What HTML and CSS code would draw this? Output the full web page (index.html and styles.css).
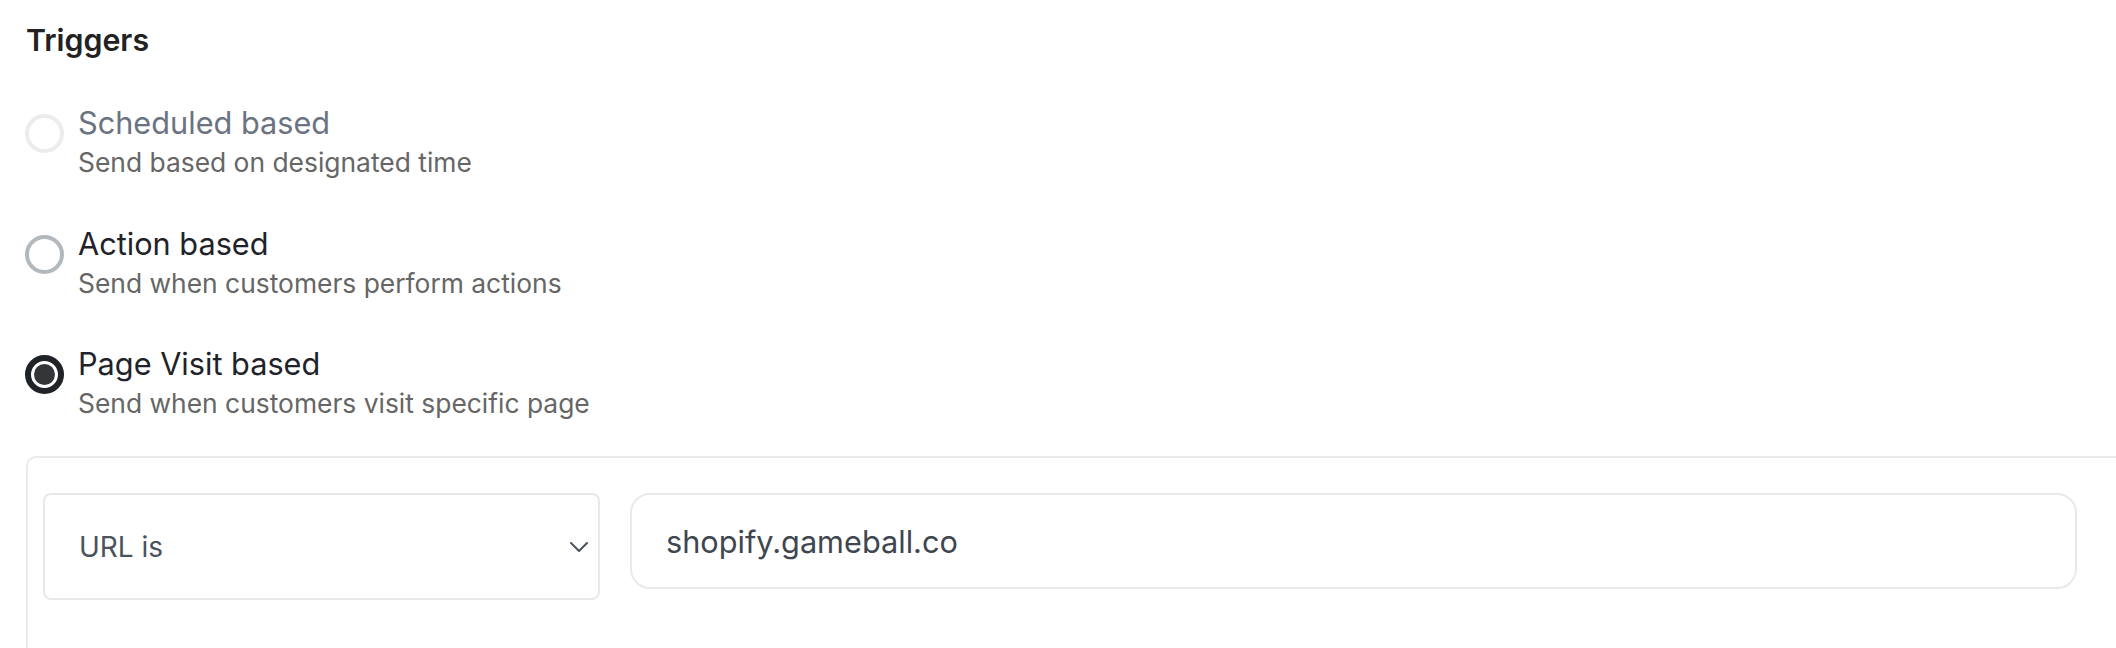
FILE: index.html
```html
<!DOCTYPE html>
<html lang="en">
<head>
<meta charset="utf-8">
<title>Triggers</title>
<link rel="stylesheet" href="styles.css">
</head>
<body>
<main class="page">
  <h2 class="title">Triggers</h2>
  <div class="options">
    <label class="option option--disabled">
      <span class="radio radio--disabled"></span>
      <span class="option-text">
        <span class="option-label">Scheduled based</span>
        <span class="option-desc">Send based on designated time</span>
      </span>
    </label>
    <label class="option">
      <span class="radio"></span>
      <span class="option-text">
        <span class="option-label">Action based</span>
        <span class="option-desc">Send when customers perform actions</span>
      </span>
    </label>
    <label class="option">
      <span class="radio radio--checked"></span>
      <span class="option-text">
        <span class="option-label">Page Visit based</span>
        <span class="option-desc">Send when customers visit specific page</span>
      </span>
    </label>
  </div>
  <section class="panel">
    <div class="rule-row">
      <div class="select">
        <span class="select-value">URL is</span>
        <svg class="chevron" viewBox="0 0 20 12" width="20" height="12" aria-hidden="true">
          <path d="M2 2 L10 10 L18 2" fill="none" stroke="currentColor" stroke-width="2" stroke-linecap="round" stroke-linejoin="round"/>
        </svg>
      </div>
      <input class="text-input" type="text" value="shopify.gameball.co" readonly>
    </div>
  </section>
</main>
</body>
</html>
```

FILE: styles.css
```css
html, body {
  margin: 0;
  padding: 0;
  background: #ffffff;
  overflow: hidden;
}

body {
  font-family: "Inter", "Noto Sans", "Liberation Sans", sans-serif;
  color: #1f2329;
}

.page {
  padding-left: 26px;
}

.title {
  margin: 22px 0 0 0;
  font-size: 30.3px;
  line-height: 36px;
  font-weight: 600;
  color: #222222;
}

.options {
  display: flex;
  flex-direction: column;
  gap: 47.5px;
  margin-top: 47px;
}

.option {
  display: flex;
  align-items: flex-start;
  gap: 14px;
}

.radio {
  flex: 0 0 auto;
  box-sizing: border-box;
  width: 39px;
  height: 39px;
  margin-top: 9px;
  margin-left: -1px;
  border-radius: 50%;
  border: 4px solid #b3b8bf;
  background: #ffffff;
  position: relative;
}

.radio--disabled {
  border-color: #ebecee;
}

.radio--checked {
  border: 6px solid #1f2328;
}

.radio--checked::after {
  content: "";
  position: absolute;
  left: 50%;
  top: 50%;
  width: 21px;
  height: 21px;
  margin: -10.5px 0 0 -10.5px;
  border-radius: 50%;
  background: #333538;
}

.option-text {
  display: flex;
  flex-direction: column;
  gap: 5px;
}

.option-label {
  font-size: 30.7px;
  line-height: 36px;
  color: #1f2329;
}

.option--disabled .option-label {
  color: #6b7380;
}

.option-desc {
  font-size: 26.4px;
  line-height: 32px;
  color: #666666;
}

.panel {
  box-sizing: border-box;
  width: 2120px;
  margin-top: 37px;
  padding: 35px 40px 60px 15px;
  border: 2px solid #ebebeb;
  border-radius: 10px;
}

.rule-row {
  display: grid;
  grid-template-columns: 557px 1447px;
  column-gap: 30px;
  align-items: start;
}

.select {
  box-sizing: border-box;
  height: 107px;
  display: flex;
  align-items: center;
  justify-content: space-between;
  padding: 0 9px 0 34px;
  border: 2px solid #e8e8e8;
  border-radius: 8px;
  color: #4b535c;
}

.select-value {
  font-size: 28px;
}

.chevron {
  width: 20px;
  height: 12px;
  color: #4b535c;
}

.text-input {
  box-sizing: border-box;
  width: 100%;
  height: 96px;
  margin: 0;
  padding: 0 34px;
  border: 2px solid #e9e9e9;
  border-radius: 20px;
  background: #ffffff;
  font-family: "Inter", "Noto Sans", "Liberation Sans", sans-serif;
  font-size: 30.7px;
  color: #3e4650;
  outline: none;
}
```
